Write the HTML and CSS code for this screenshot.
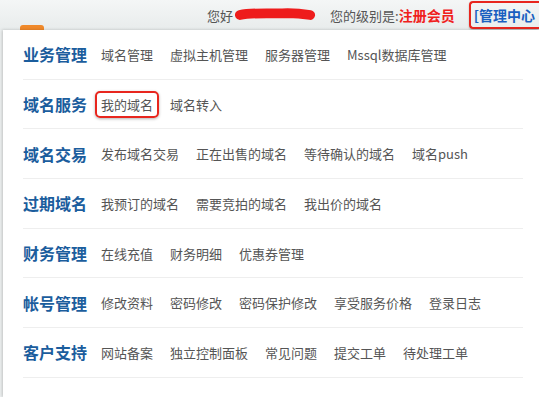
FILE: index.html
```html
<!DOCTYPE html>
<html lang="zh-CN">
<head>
    <meta charset="UTF-8">
    <meta name="viewport" content="width=device-width, initial-scale=1.0">
    <title>管理中心</title>
    <link rel="stylesheet" href="styles.css">
</head>
<body>

    <div class="topbar">
        <span class="hello">您好</span>
        <svg class="scribble" width="84" height="16" viewBox="0 0 84 16">
            <path d="M6 8 C20 5, 40 7, 55 6 C65 6, 72 7, 78 8" stroke="#ee1c1c" stroke-width="10" stroke-linecap="round" fill="none"/>
        </svg>
        <span class="level">您的级别是:<b class="member">注册会员</b></span>
        <span class="center-link">[管理中心</span>
    </div>

    <div class="tab"></div>

    <div class="panel">
        <div class="row">
            <span class="cat">业务管理</span>
            <a class="item">域名管理</a>
            <a class="item">虚拟主机管理</a>
            <a class="item">服务器管理</a>
            <a class="item">Mssql数据库管理</a>
        </div>
        <div class="row">
            <span class="cat">域名服务</span>
            <a class="item marked">我的域名</a>
            <a class="item">域名转入</a>
        </div>
        <div class="row">
            <span class="cat">域名交易</span>
            <a class="item">发布域名交易</a>
            <a class="item">正在出售的域名</a>
            <a class="item">等待确认的域名</a>
            <a class="item">域名push</a>
        </div>
        <div class="row">
            <span class="cat">过期域名</span>
            <a class="item">我预订的域名</a>
            <a class="item">需要竞拍的域名</a>
            <a class="item">我出价的域名</a>
        </div>
        <div class="row">
            <span class="cat">财务管理</span>
            <a class="item">在线充值</a>
            <a class="item">财务明细</a>
            <a class="item">优惠券管理</a>
        </div>
        <div class="row">
            <span class="cat">帐号管理</span>
            <a class="item">修改资料</a>
            <a class="item">密码修改</a>
            <a class="item">密码保护修改</a>
            <a class="item">享受服务价格</a>
            <a class="item">登录日志</a>
        </div>
        <div class="row">
            <span class="cat">客户支持</span>
            <a class="item">网站备案</a>
            <a class="item">独立控制面板</a>
            <a class="item">常见问题</a>
            <a class="item">提交工单</a>
            <a class="item">待处理工单</a>
        </div>
    </div>

</body>
</html>
```

FILE: styles.css
```css
body {
    margin: 0;
    font-family: "Noto Sans CJK SC", "Noto Sans", sans-serif;
    background: #eef1f1;
    height: 397px;
    overflow: hidden;
    position: relative;
}
.topbar {
    height: 30px;
    display: flex;
    align-items: center;
    padding-left: 207px;
    font-size: 13px;
    color: #555;
    background: linear-gradient(#f4f6f6, #e8ecec);
    white-space: nowrap;
}
.scribble {
    margin-left: 1px;
}
.level {
    margin-left: 14px;
}
.member {
    font-size: 14px;
    color: #f0201c;
}
.center-link {
    margin-left: 14px;
    padding: 2px 4px 2px 3px;
    font-size: 14px;
    font-weight: bold;
    color: #1a5fc0;
    border: 2px solid #e8261e;
    border-right: none;
    border-radius: 4px 0 0 4px;
    box-shadow: 0 1px 2px rgba(0, 0, 0, 0.25);
}
.tab {
    position: absolute;
    left: 20px;
    top: 25px;
    width: 24px;
    height: 8px;
    background: #f0892a;
    border-radius: 3px 3px 0 0;
}
.panel {
    position: relative;
    margin-left: 3px;
    height: 367px;
    background: #fff;
    padding: 0 16px 0 20px;
    box-shadow: -1px 0 3px rgba(0, 0, 0, 0.2);
}
.row {
    height: 48.7px;
    display: flex;
    align-items: center;
    gap: 17px;
    border-bottom: 1px solid #eeeeee;
}
.cat {
    font-size: 16px;
    font-weight: bold;
    color: #1b5d9d;
    margin-right: -3px;
}
.item {
    font-size: 13px;
    color: #555;
    cursor: pointer;
}
.marked {
    margin: 0 -6px 0 -6px;
    padding: 2px 4px;
    border: 2px solid #e8261e;
    border-radius: 5px;
    box-shadow: 0 1px 3px rgba(0, 0, 0, 0.3);
}
```
